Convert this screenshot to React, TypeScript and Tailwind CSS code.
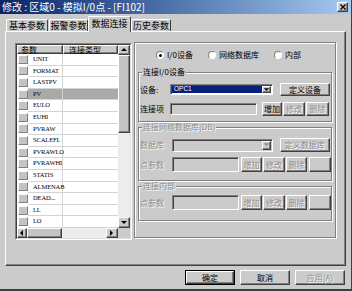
import React from "react";

const raised =
  "border border-t-white border-l-white border-r-[#404040] border-b-[#404040] shadow-[inset_-1px_-1px_0_#808080]";
const sunken =
  "border border-t-[#808080] border-l-[#808080] border-r-white border-b-white shadow-[inset_1px_1px_0_#404040]";
const etched = "border border-[#808080] shadow-[inset_1px_1px_0_#fff,1px_1px_0_#fff]";
const dis = "text-[#8c8c8c] [text-shadow:1px_1px_0_#fff]";
const tab =
  "h-[12px] border border-b-0 border-t-white border-l-white border-r-[#404040] rounded-t-[2px] flex items-center justify-center whitespace-nowrap";

const params = [
  "UNIT",
  "FORMAT",
  "LASTPV",
  "PV",
  "EULO",
  "EUHI",
  "PVRAW",
  "SCALEFL",
  "PVRAWLO",
  "PVRAWHI",
  "STATIS",
  "ALMENAB",
  "DEAD...",
  "LL",
  "LO",
];

function Btn({ w, label, off, className = "" }: { w: string; label: string; off?: boolean; className?: string }) {
  return (
    <div className={`${w} h-full ${raised} flex items-center justify-center leading-none whitespace-nowrap ${off ? dis : "text-black"} ${className}`}>
      {label}
    </div>
  );
}

function Arrow({ dir, off }: { dir: "up" | "down" | "left" | "right"; off?: boolean }) {
  const pts = {
    up: "1,5 4,2 7,5",
    down: "1,2 4,5 7,2",
    left: "5,1 2,4 5,7",
    right: "2,1 5,4 2,7",
  }[dir];
  return (
    <svg width="8" height="8" viewBox="0 0 8 8">
      <polygon points={pts} fill={off ? "#8c8c8c" : "#000"} />
    </svg>
  );
}

function Radio({ on, label }: { on?: boolean; label: string }) {
  return (
    <div className="flex items-center">
      <div className="w-[8px] h-[8px] rounded-full border border-t-[#808080] border-l-[#808080] border-r-white border-b-white bg-white flex items-center justify-center">
        {on && <div className="w-[3px] h-[3px] rounded-full bg-black" />}
      </div>
      <span className="ml-[3px] leading-none whitespace-nowrap">{label}</span>
    </div>
  );
}

function ParamRow({ label }: { label: string }) {
  // 点参数 row used in the two disabled groups
  return (
    <div className="flex items-center h-[15px] mt-[5px] pl-[1px]">
      <span className={`w-[32px] leading-none ${dis}`}>{label}</span>
      <div className={`w-[68px] h-full ${sunken}`} />
      <div className="flex h-full ml-[2px] gap-[1px]">
        <Btn w="w-[21px]" label="增加" off />
        <Btn w="w-[22px]" label="修改" off />
        <Btn w="w-[21px]" label="删除" off />
        <Btn w="w-[22px]" label="" off className="ml-[1px]" />
      </div>
    </div>
  );
}

export default function App() {
  return (
    <div className="w-[352px] h-[291px] bg-[#cbcbcb] border-r border-b-2 border-r-[#404040] border-b-[#404040] font-['Noto_Sans_CJK_SC',sans-serif] text-[8px] text-black overflow-hidden select-none">
      {/* title bar */}
      <div className="h-[14px] flex items-center bg-linear-to-r from-[#0a246a] to-[#a6caf0] pl-[2px] pr-[3px]">
        <span className="text-white text-[10px] leading-none whitespace-nowrap">修改 : 区域0 - 模拟I/0点 - [FI102]</span>
        <div className={`ml-auto w-[11px] h-[10px] bg-[#cbcbcb] ${raised} flex items-center justify-center`}>
          <svg width="6" height="6" viewBox="0 0 6 6">
            <path d="M0.5 0.5L5.5 5.5M5.5 0.5L0.5 5.5" stroke="#000" strokeWidth="1.4" />
          </svg>
        </div>
      </div>

      {/* tabs */}
      <div className="h-[15px] mt-[2px] pl-[6px] flex items-end text-[9px] leading-none">
        <div className={`w-[42px] ${tab}`}>基本参数</div>
        <div className={`w-[39px] ml-[1px] ${tab}`}>报警参数</div>
        <div className="relative z-10 w-[43px] h-[16px] -mb-[1px] bg-[#cbcbcb] border border-b-0 border-t-white border-l-white border-r-[#404040] rounded-t-[2px] flex items-start pt-[2px] justify-center whitespace-nowrap">数据连接</div>
        <div className={`w-[40px] ${tab}`}>历史参数</div>
      </div>

      {/* tab panel */}
      <div className="ml-[5px] w-[341px] h-[235px] border border-t-white border-l-white border-r-[#404040] border-b-[#404040] shadow-[inset_-1px_-1px_0_#808080] flex items-start pt-[11px] pl-[9px]">
        {/* parameter list */}
        <div className="w-[117px] h-[197px] border border-t-[#808080] border-l-[#808080] border-r-white border-b-white">
          <div className="w-full h-full border border-t-[#404040] border-l-[#404040] border-r-[#dfdfdf] border-b-[#dfdfdf] bg-white flex flex-col">
            <div className="flex h-[183px]">
              <div className="w-[101px] flex flex-col">
                <div className="flex h-[9px] shrink-0">
                  <div className={`w-[46px] h-full bg-[#cbcbcb] ${raised} flex items-center pl-[3px] leading-none`}>参数</div>
                  <div className={`w-[55px] h-full bg-[#cbcbcb] ${raised} flex items-center pl-[5px] leading-none`}>连接类型</div>
                </div>
                {params.map((p) => (
                  <div key={p} className="flex h-[11.6px] shrink-0">
                    <div className="w-[11px] h-full flex items-center pl-[1px] border-b border-b-white">
                      <div className="w-[10px] h-[9px] bg-[#c4c4c4] border border-t-white border-l-white border-r-[#808080] border-b-[#808080]" />
                    </div>
                    <div
                      className={`w-[35px] h-full border-r border-b border-[#d4d4d4] flex items-center pl-[5px] font-['Liberation_Serif',serif] text-[6.5px] tracking-[-0.1px] leading-none ${p === "PV" ? "bg-[#a9a9a9]" : ""}`}
                    >
                      {p}
                    </div>
                    <div className={`w-[55px] h-full border-b border-[#d4d4d4] ${p === "PV" ? "bg-[#a9a9a9]" : ""}`} />
                  </div>
                ))}
              </div>
              {/* vertical scrollbar */}
              <div className="w-[12px] h-full flex flex-col">
                <div className={`h-[10px] bg-[#cbcbcb] ${raised} flex items-center justify-center`}>
                  <Arrow dir="up" />
                </div>
                <div className={`h-[78px] bg-[#c4c4c4] ${raised}`} />
                <div className="h-[84px] bg-[#ececec]" />
                <div className={`h-[11px] bg-[#cbcbcb] ${raised} flex items-center justify-center`}>
                  <Arrow dir="down" />
                </div>
              </div>
            </div>
            {/* horizontal scrollbar */}
            <div className="flex h-[10px]">
              <div className={`w-[10px] bg-[#cbcbcb] ${raised} flex items-center justify-center`}>
                <Arrow dir="left" />
              </div>
              <div className={`w-[35px] bg-[#c4c4c4] ${raised}`} />
              <div className="w-[44px] bg-[#ececec]" />
              <div className={`w-[12px] bg-[#cbcbcb] ${raised} flex items-center justify-center`}>
                <Arrow dir="right" />
              </div>
              <div className="w-[12px] bg-[#cbcbcb]" />
            </div>
          </div>
        </div>

        {/* connection settings */}
        <div className={`ml-[2px] -mt-[1px] w-[202px] h-[196px] ${etched} flex flex-col px-[3px]`}>
          <div className="flex items-center h-[10px] mt-[7px] pl-[18px] gap-[15px]">
            <Radio on label="I/0设备" />
            <Radio label="网络数据库" />
            <Radio label="内部" />
          </div>

          {/* 连接I/0设备 */}
          <div className={`mt-[12px] h-[50px] ${etched} flex flex-col`}>
            <span className="-mt-[5px] ml-[3px] px-[1px] bg-[#cbcbcb] self-start leading-none">连接I/0设备</span>
            <div className="flex items-center h-[13px] mt-[7px] pl-[1px]">
              <span className="w-[30px] leading-none">设备:</span>
              <div className={`w-[103px] h-[11px] bg-white ${sunken} flex items-center p-[1px]`}>
                <div className="flex-1 h-full bg-[#0a1f7a] text-white flex items-center pl-[2px] leading-none font-['Liberation_Sans',sans-serif] text-[6.5px]">OPC1</div>
                <div className={`w-[9px] h-full bg-[#cbcbcb] ${raised} flex items-center justify-center`}>
                  <Arrow dir="down" />
                </div>
              </div>
              <Btn w="w-[50px]" label="定义设备" className="ml-[7px]" />
            </div>
            <div className="flex items-center h-[14px] mt-[6px] pl-[1px]">
              <span className="w-[30px] leading-none">连接项</span>
              <div className={`w-[87px] h-[12px] ${sunken}`} />
              <div className="flex h-full ml-[5px] gap-[1px]">
                <Btn w="w-[20px]" label="增加" />
                <Btn w="w-[22px]" label="修改" off />
                <Btn w="w-[23px]" label="删除" off />
              </div>
            </div>
          </div>

          {/* 连接网络数据库(DB) */}
          <div className={`mt-[5px] h-[54px] ${etched} flex flex-col`}>
            <span className={`-mt-[5px] ml-[3px] px-[1px] bg-[#cbcbcb] self-start leading-none ${dis}`}>连接网络数据库(DB)</span>
            <div className="flex items-center h-[14px] mt-[7px] pl-[1px]">
              <span className={`w-[32px] leading-none ${dis}`}>数据库</span>
              <div className={`w-[101px] h-[13px] ${sunken} flex justify-end p-[1px]`}>
                <div className={`w-[9px] h-full bg-[#cbcbcb] ${raised} flex items-center justify-center`}>
                  <Arrow dir="down" off />
                </div>
              </div>
              <Btn w="w-[50px]" label="定义数据库" off className="ml-[7px]" />
            </div>
            <ParamRow label="点参数" />
          </div>

          {/* 连接内部 */}
          <div className={`mt-[5px] h-[35px] ${etched} flex flex-col`}>
            <span className={`-mt-[5px] ml-[3px] px-[1px] bg-[#cbcbcb] self-start leading-none ${dis}`}>连接内部</span>
            <ParamRow label="点参数" />
          </div>
        </div>
      </div>

      {/* dialog buttons */}
      <div className="flex h-[15px] mt-[4px] pl-[185px] gap-[5px]">
        <div className="w-[50px] h-full border border-black">
          <Btn w="w-full" label="确定" />
        </div>
        <Btn w="w-[50px]" label="取消" />
        <Btn w="w-[50px]" label="应用(A)" off />
      </div>
    </div>
  );
}
